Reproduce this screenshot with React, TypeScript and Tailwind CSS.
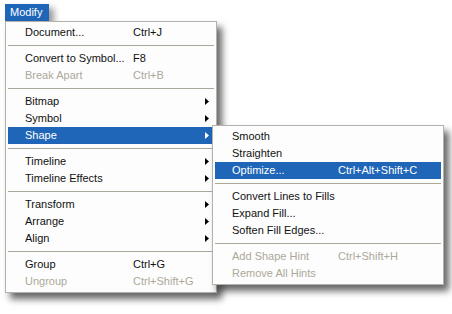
import React from "react";

type Item =
  | { sep: true }
  | { label: string; shortcut?: string; disabled?: boolean; arrow?: boolean; active?: boolean };

const mainItems: Item[] = [
  { label: "Document...", shortcut: "Ctrl+J" },
  { sep: true },
  { label: "Convert to Symbol...", shortcut: "F8" },
  { label: "Break Apart", shortcut: "Ctrl+B", disabled: true },
  { sep: true },
  { label: "Bitmap", arrow: true },
  { label: "Symbol", arrow: true },
  { label: "Shape", arrow: true, active: true },
  { sep: true },
  { label: "Timeline", arrow: true },
  { label: "Timeline Effects", arrow: true },
  { sep: true },
  { label: "Transform", arrow: true },
  { label: "Arrange", arrow: true },
  { label: "Align", arrow: true },
  { sep: true },
  { label: "Group", shortcut: "Ctrl+G" },
  { label: "Ungroup", shortcut: "Ctrl+Shift+G", disabled: true },
];

const subItems: Item[] = [
  { label: "Smooth" },
  { label: "Straighten" },
  { label: "Optimize...", shortcut: "Ctrl+Alt+Shift+C", active: true },
  { sep: true },
  { label: "Convert Lines to Fills" },
  { label: "Expand Fill..." },
  { label: "Soften Fill Edges..." },
  { sep: true },
  { label: "Add Shape Hint", shortcut: "Ctrl+Shift+H", disabled: true },
  { label: "Remove All Hints", disabled: true },
];

function Arrow({ white }: { white: boolean }) {
  return (
    <svg width="4" height="7" viewBox="0 0 4 7" className="block">
      <path d="M0 0 L4 3.5 L0 7 Z" fill={white ? "#ffffff" : "#000000"} />
    </svg>
  );
}

function MenuRows({ items, labelW }: { items: Item[]; labelW: string }) {
  return (
    <>
      {items.map((it, i) => {
        if ("sep" in it) {
          return <div key={i} className="my-[4px] h-px bg-[#aca899]" />;
        }
        const color = it.active ? "text-white" : it.disabled ? "text-[#aca899]" : "text-[#111111]";
        return (
          <div
            key={i}
            className={`flex h-[17px] items-center pl-[17px] pr-[5px] ${it.active ? "bg-[#1f66b8]" : ""} ${color}`}
          >
            <span className={`${labelW} shrink-0 whitespace-nowrap`}>{it.label}</span>
            <span className="flex-1 whitespace-nowrap">{it.shortcut ?? ""}</span>
            {it.arrow ? <Arrow white={!!it.active} /> : null}
          </div>
        );
      })}
    </>
  );
}

export default function App() {
  return (
    <div
      className="relative h-[314px] w-[452px] overflow-hidden bg-white text-[11px] leading-[13px]"
      style={{ fontFamily: '"Liberation Sans", Arial, sans-serif' }}
    >
      <div className="ml-[5px] pt-[4px]">
        <div className="flex h-[17px] w-[44px] items-center bg-[#1f66b8] pl-[5px] text-white shadow-[5px_4px_6px_rgba(0,0,0,0.4)]">
          Modify
        </div>
        <div className="relative w-[212px] border border-[#b3b1a9] bg-[#fdfdfd] p-[2px] shadow-[5px_6px_7px_rgba(0,0,0,0.6)]">
          <MenuRows items={mainItems} labelW="w-[108px]" />
          <div className="absolute left-[206px] top-[103px] w-[232px] border border-[#b3b1a9] bg-[#fdfdfd] p-[2px] shadow-[5px_6px_7px_rgba(0,0,0,0.6)]">
            <MenuRows items={subItems} labelW="w-[106px]" />
          </div>
        </div>
      </div>
    </div>
  );
}
